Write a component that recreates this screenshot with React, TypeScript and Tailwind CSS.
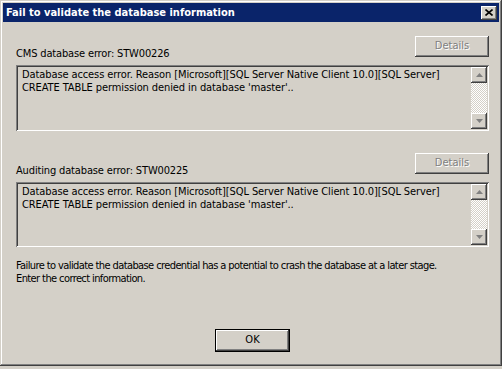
import React from "react";

const raised =
  "shadow-[inset_-1px_-1px_#404040,inset_1px_1px_#ffffff,inset_-2px_-2px_#808080,inset_2px_2px_#d4d0c8]";
const sunken =
  "shadow-[inset_1px_1px_#808080,inset_-1px_-1px_#ffffff,inset_2px_2px_#404040,inset_-2px_-2px_#d4d0c8]";

function Arrow({ up }: { up: boolean }) {
  return (
    <svg width="7" height="4" viewBox="0 0 7 4">
      {up ? (
        <polygon points="3.5,0 7,4 0,4" fill="#808080" />
      ) : (
        <polygon points="0,0 7,0 3.5,4" fill="#808080" />
      )}
    </svg>
  );
}

function Scrollbar() {
  return (
    <div className="flex flex-col w-[16px] h-full">
      <div className={`w-[16px] h-[16px] bg-[#d4d0c8] flex items-center justify-center ${raised}`}>
        <Arrow up />
      </div>
      <div className="flex-1 bg-[repeating-conic-gradient(#ffffff_0_25%,#d4d0c8_0_50%)] bg-[length:2px_2px]" />
      <div className={`w-[16px] h-[16px] bg-[#d4d0c8] flex items-center justify-center ${raised}`}>
        <Arrow up={false} />
      </div>
    </div>
  );
}

function ErrorBox({ h }: { h: string }) {
  return (
    <div className={`relative w-[473px] ${h} bg-[#d4d0c8] ${sunken} flex p-[2px]`}>
      <div className="flex-1 pl-[4px] pt-[1px] leading-[13px] tracking-[-0.1px]">
        Database access error. Reason [Microsoft][SQL Server Native Client 10.0][SQL Server]
        <br />
        CREATE TABLE permission denied in database 'master'..
      </div>
      <Scrollbar />
    </div>
  );
}

function DetailsButton() {
  return (
    <div
      className={`w-[74px] h-[21px] bg-[#d4d0c8] ${raised} flex items-center justify-center text-[#808080] [text-shadow:1px_1px_0_#ffffff]`}
    >
      Details
    </div>
  );
}

export default function App() {
  return (
    <div
      className="w-[502px] h-[369px] bg-[#d4d0c8] text-[11px] text-black"
      style={{ fontFamily: '"DejaVu Sans Condensed", "DejaVu Sans", sans-serif' }}
    >
      <div
        className={`w-[502px] h-[366px] bg-[#d4d0c8] p-[3px] shadow-[inset_-1px_-1px_#404040,inset_1px_1px_#d4d0c8,inset_-2px_-2px_#808080,inset_2px_2px_#ffffff] flex flex-col`}
      >
        <div className="h-[19px] bg-[#0a246a] flex items-center justify-between pl-[3px] pr-[2px]">
          <span className="text-white font-bold text-[11px] leading-[13px]">
            Fail to validate the database information
          </span>
          <div className={`w-[16px] h-[14px] bg-[#d4d0c8] ${raised} flex items-center justify-center`}>
            <svg width="8" height="7" viewBox="0 0 8 7">
              <path d="M0.5 0.5 L7.5 6.5 M7.5 0.5 L0.5 6.5" stroke="#000" strokeWidth="1.6" />
            </svg>
          </div>
        </div>
        <div className="flex flex-col pl-[13px]">
          <div className="mt-[14px] flex items-end justify-between w-[473px] h-[21px]">
            <span className="leading-[13px] mb-[-3px] tracking-[-0.15px]">CMS database error: STW00226</span>
            <DetailsButton />
          </div>
          <div className="mt-[8px]">
            <ErrorBox h="h-[66px]" />
          </div>
          <div className="mt-[22px] flex items-end justify-between w-[473px] h-[21px]">
            <span className="leading-[13px] mb-[-3px] tracking-[-0.15px]">Auditing database error: STW00225</span>
            <DetailsButton />
          </div>
          <div className="mt-[8px]">
            <ErrorBox h="h-[65px]" />
          </div>
          <div className="mt-[12px] leading-[13px] tracking-[-0.6px]">
            Failure to validate the database credential has a potential to crash the database at a later stage.
            <br />
            Enter the correct information.
          </div>
          <div className="mt-[44px] flex justify-center w-[473px]">
            <div className="w-[75px] h-[23px] border border-black">
              <div className={`w-full h-full bg-[#d4d0c8] ${raised} flex items-center justify-center`}>
                OK
              </div>
            </div>
          </div>
        </div>
      </div>
    </div>
  );
}
